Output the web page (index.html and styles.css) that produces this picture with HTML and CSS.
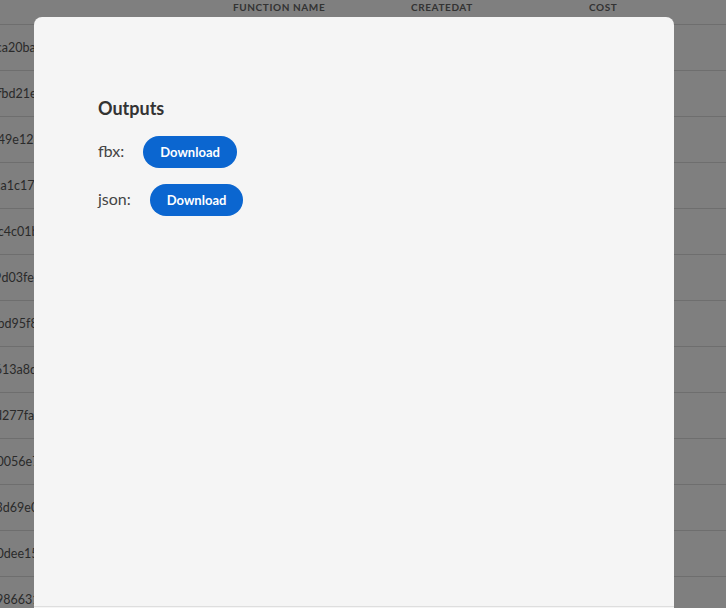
FILE: index.html
```html
<!DOCTYPE html>
<html>
<head>
    <meta charset="UTF-8" />
    <title>Jobs</title>
    <link rel="stylesheet" href="styles.css">
</head>
<body>
    <!-- jobs table (behind the modal) -->
    <div class="jobs">
      <div class="row head">
        <div>ID</div>
        <div>Function name</div>
        <div>CreatedAt</div>
        <div>Cost</div>
      </div>
      <div class="row"><div class="id">64b1e7fca20ba91c</div><div></div><div></div><div></div></div>
      <div class="row"><div class="id">a02c94bfbd21e4a0</div><div></div><div></div><div></div></div>
      <div class="row"><div class="id">5e8d0a349e126fd3</div><div></div><div></div><div></div></div>
      <div class="row"><div class="id">7c31fa0ca1c17e25</div><div></div><div></div><div></div></div>
      <div class="row"><div class="id">d9a7e52c4c01b8e6</div><div></div><div></div><div></div></div>
      <div class="row"><div class="id">16fbc0a9d03fe7a1</div><div></div><div></div><div></div></div>
      <div class="row"><div class="id">e4c2d17bd95f8c30</div><div></div><div></div><div></div></div>
      <div class="row"><div class="id">8a0b3fe613a8d942</div><div></div><div></div><div></div></div>
      <div class="row"><div class="id">2f7c9e0d277fa15b</div><div></div><div></div><div></div></div>
      <div class="row"><div class="id">b3e8a1c0056e7d9f</div><div></div><div></div><div></div></div>
      <div class="row"><div class="id">90d4f2a3d69e0b81</div><div></div><div></div><div></div></div>
      <div class="row"><div class="id">c5a7b1e0dee15c62</div><div></div><div></div><div></div></div>
      <div class="row"><div class="id">4e1f8d2986631a07</div><div></div><div></div><div></div></div>
    </div>

    <!-- outputs modal -->
    <div class="overlay">
      <div class="modal">
        <div class="modal-body">
          <h3 class="title">Outputs</h3>
          <div class="output">
            <span class="label">fbx:</span>
            <button class="download">Download</button>
          </div>
          <div class="output">
            <span class="label">json:</span>
            <button class="download">Download</button>
          </div>
        </div>
        <div class="modal-footer"></div>
      </div>
    </div>
</body>
</html>
```

FILE: styles.css
```css
/* page */
body {
  margin: 0;
  background-color: #fff;
  font-family: Lato, "Open Sans", sans-serif;
  overflow: hidden;
}

/* jobs table */
.jobs {
  margin-left: -59px;
}

.row {
  display: grid;
  grid-template-columns: 280px 178px 178px 178px;
  height: 45px;
  border-bottom: 1px solid #dcdcdc;
  align-items: center;
  color: #555;
  font-size: 12.5px;
}

.row > div {
  padding: 0 12px;
  white-space: nowrap;
  overflow: hidden;
}

.row.head {
  height: 24px;
  align-items: start;
  font-size: 10px;
  font-weight: bold;
  text-transform: uppercase;
  letter-spacing: 0.6px;
  color: #666;
}

.row.head > div {
  padding-top: 1px;
}

.id {
  text-indent: -4px;
}

/* modal */
.overlay {
  position: fixed;
  top: 0;
  left: 0;
  right: 0;
  bottom: 0;
  background-color: rgba(0, 0, 0, 0.5);
}

.modal {
  margin: 17px 0 0 34px;
  width: 640px;
  background-color: #f5f5f5;
  border-radius: 8px 8px 0 0;
}

.modal-body {
  box-sizing: border-box;
  height: 589px;
  padding: 80px 64px;
}

.modal-footer {
  height: 40px;
  border-top: 1px solid #dedede;
}

.title {
  margin: 0 0 17px 0;
  font-size: 18px;
  font-weight: bold;
  color: #333;
}

.output {
  display: flex;
  align-items: baseline;
  gap: 19px;
  margin-bottom: 16px;
}

.label {
  font-size: 16px;
  color: #444;
}

.download {
  height: 32px;
  padding: 0 17px;
  border: none;
  border-radius: 16px;
  background-color: #0b66d0;
  color: #fff;
  font-family: Lato, "Open Sans", sans-serif;
  font-size: 13px;
  font-weight: bold;
  cursor: pointer;
}
```
